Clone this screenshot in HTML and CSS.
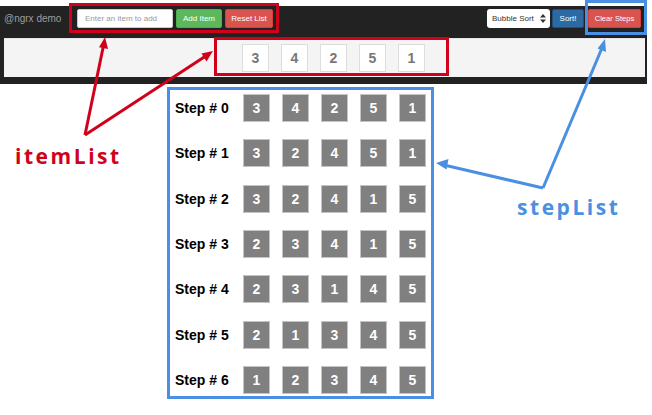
FILE: index.html
```html
<!DOCTYPE html>
<html>
<head>
<meta charset="utf-8">
<link rel="stylesheet" href="styles.css">
</head>
<body>
<div class="page">
  <header class="app-bar">
    <nav class="nav">
      <span class="brand">@ngrx demo</span>
      <div class="item-form">
        <input class="item-input" type="text" placeholder="Enter an item to add">
        <button class="btn btn-green">Add Item</button>
        <button class="btn btn-red">Reset List</button>
      </div>
      <div class="sort-form">
        <div class="select">Bubble Sort
          <svg class="carets" width="6" height="9" viewBox="0 0 6 9"><path d="M3 0L6 3.5H0Z M3 9L0 5.5H6Z" fill="#333"/></svg>
        </div>
        <button class="btn btn-blue">Sort!</button>
        <button class="btn btn-red btn-clear">Clear Steps</button>
      </div>
    </nav>
    <div class="item-panel">
      <div class="item-box">3</div>
      <div class="item-box">4</div>
      <div class="item-box">2</div>
      <div class="item-box">5</div>
      <div class="item-box">1</div>
    </div>
  </header>

  <section class="steps">
    <div class="step"><span class="step-label">Step # 0</span><span class="cell">3</span><span class="cell">4</span><span class="cell">2</span><span class="cell">5</span><span class="cell">1</span></div>
    <div class="step"><span class="step-label">Step # 1</span><span class="cell">3</span><span class="cell">2</span><span class="cell">4</span><span class="cell">5</span><span class="cell">1</span></div>
    <div class="step"><span class="step-label">Step # 2</span><span class="cell">3</span><span class="cell">2</span><span class="cell">4</span><span class="cell">1</span><span class="cell">5</span></div>
    <div class="step"><span class="step-label">Step # 3</span><span class="cell">2</span><span class="cell">3</span><span class="cell">4</span><span class="cell">1</span><span class="cell">5</span></div>
    <div class="step"><span class="step-label">Step # 4</span><span class="cell">2</span><span class="cell">3</span><span class="cell">1</span><span class="cell">4</span><span class="cell">5</span></div>
    <div class="step"><span class="step-label">Step # 5</span><span class="cell">2</span><span class="cell">1</span><span class="cell">3</span><span class="cell">4</span><span class="cell">5</span></div>
    <div class="step"><span class="step-label">Step # 6</span><span class="cell">1</span><span class="cell">2</span><span class="cell">3</span><span class="cell">4</span><span class="cell">5</span></div>
  </section>

  <svg class="annotations" width="652" height="415" viewBox="0 0 652 415">
    <g fill="none" stroke="#d0021b" stroke-width="3">
      <rect x="70.5" y="4.5" width="207" height="27"/>
      <rect x="215.5" y="38.5" width="232" height="36"/>
      <line x1="85" y1="135" x2="103.4" y2="46"/>
      <line x1="85" y1="135" x2="205" y2="56.5"/>
    </g>
    <g fill="#d0021b">
      <path d="M105 37L108 49L99 47.3Z"/>
      <path d="M213 51L206.5 61.5L201.5 53.5Z"/>
    </g>
    <g fill="none" stroke="#4a90e2" stroke-width="3">
      <rect x="586.5" y="1.5" width="59" height="32"/>
      <line x1="543" y1="188" x2="602" y2="48"/>
      <line x1="543" y1="188" x2="446" y2="165.5"/>
    </g>
    <g fill="#4a90e2">
      <path d="M605 39L606 52L597.5 48.5Z"/>
      <path d="M436 163L448.5 159L446.5 169.5Z"/>
    </g>
  </svg>
  <span class="tag tag-item">itemList</span>
  <span class="tag tag-step">stepList</span>
</div>
</body>
</html>
```

FILE: styles.css
```css
* { box-sizing: border-box; }
html, body { margin: 0; padding: 0; background: #fff; }
body { font-family: "Liberation Sans", Arial, sans-serif; }

.page {
  position: relative;
  width: 652px;
  height: 415px;
  overflow: hidden;
  padding-top: 6px;
}

.app-bar {
  width: 647px;
  height: 78px;
  background: #222;
  display: flex;
  flex-direction: column;
}

.nav {
  height: 32px;
  display: flex;
  align-items: flex-start;
  padding: 3px 6px 0 4px;
}

.brand {
  color: #9d9d9d;
  font-size: 10px;
  line-height: 19px;
  width: 73px;
}

.item-form, .sort-form {
  display: flex;
  gap: 3px;
}
.sort-form { margin-left: auto; gap: 2px; }

.item-input {
  width: 96px;
  height: 19px;
  border: 1px solid #ccc;
  border-radius: 2px;
  padding: 0 7px;
  font-family: "Liberation Sans", Arial, sans-serif;
  font-size: 8px;
  background: #fff;
  outline: none;
}
.item-input::placeholder { color: #999; }

.btn {
  height: 19px;
  border: 1px solid transparent;
  border-radius: 2px;
  color: #fff;
  font-family: "Liberation Sans", Arial, sans-serif;
  font-size: 8px;
  padding: 0;
  line-height: 17px;
}
.btn-green { background: #5cb85c; border-color: #4cae4c; width: 46px; }
.btn-red { background: #d9534f; border-color: #d43f3a; width: 48px; }
.btn-blue { background: #2b6aa3; border-color: #1f4f7a; width: 32px; }
.btn-clear { width: 53px; margin-left: 2px; font-size: 7.6px; }

.select {
  width: 63px;
  height: 19px;
  background: #fff;
  border-radius: 3px;
  font-size: 8px;
  color: #333;
  display: flex;
  align-items: center;
  justify-content: space-between;
  padding: 0 4px 0 5px;
}

.item-panel {
  margin: 0 2px 0 4px;
  height: 39px;
  background: #f4f4f4;
  border-top: 1px solid #e6e6e6;
  display: flex;
  align-items: center;
  gap: 12px;
  padding-left: 238px;
}

.item-box {
  width: 27px;
  height: 28px;
  background: #fff;
  border: 1px solid #ddd;
  color: #777;
  font-weight: bold;
  font-size: 14px;
  display: flex;
  align-items: center;
  justify-content: center;
}

.steps {
  margin: 3px 0 0 167px;
  width: 267px;
  height: 312px;
  border: 3px solid #4a90e2;
  padding: 4px 5px 2px 5px;
  display: flex;
  flex-direction: column;
  gap: 17.33px;
}

.step {
  display: flex;
  align-items: center;
  gap: 12px;
  height: 28px;
}

.step-label {
  width: 56px;
  font-weight: bold;
  font-size: 14px;
  color: #000;
  white-space: nowrap;
}

.cell {
  width: 27px;
  height: 28px;
  background: #808080;
  border: 1px solid #c4c4c4;
  color: #fff;
  font-weight: bold;
  font-size: 14px;
  display: flex;
  align-items: center;
  justify-content: center;
}

.annotations {
  position: absolute;
  top: 0;
  left: 0;
  pointer-events: none;
}

.tag {
  position: absolute;
  font-family: "Open Sans", sans-serif;
  font-weight: bold;
  font-size: 21px;
  letter-spacing: 2.55px;
  line-height: 1;
}
.tag-item { left: 15px; top: 146px; color: #d0021b; }
.tag-step { left: 517px; top: 197px; color: #4a90e2; }
```
